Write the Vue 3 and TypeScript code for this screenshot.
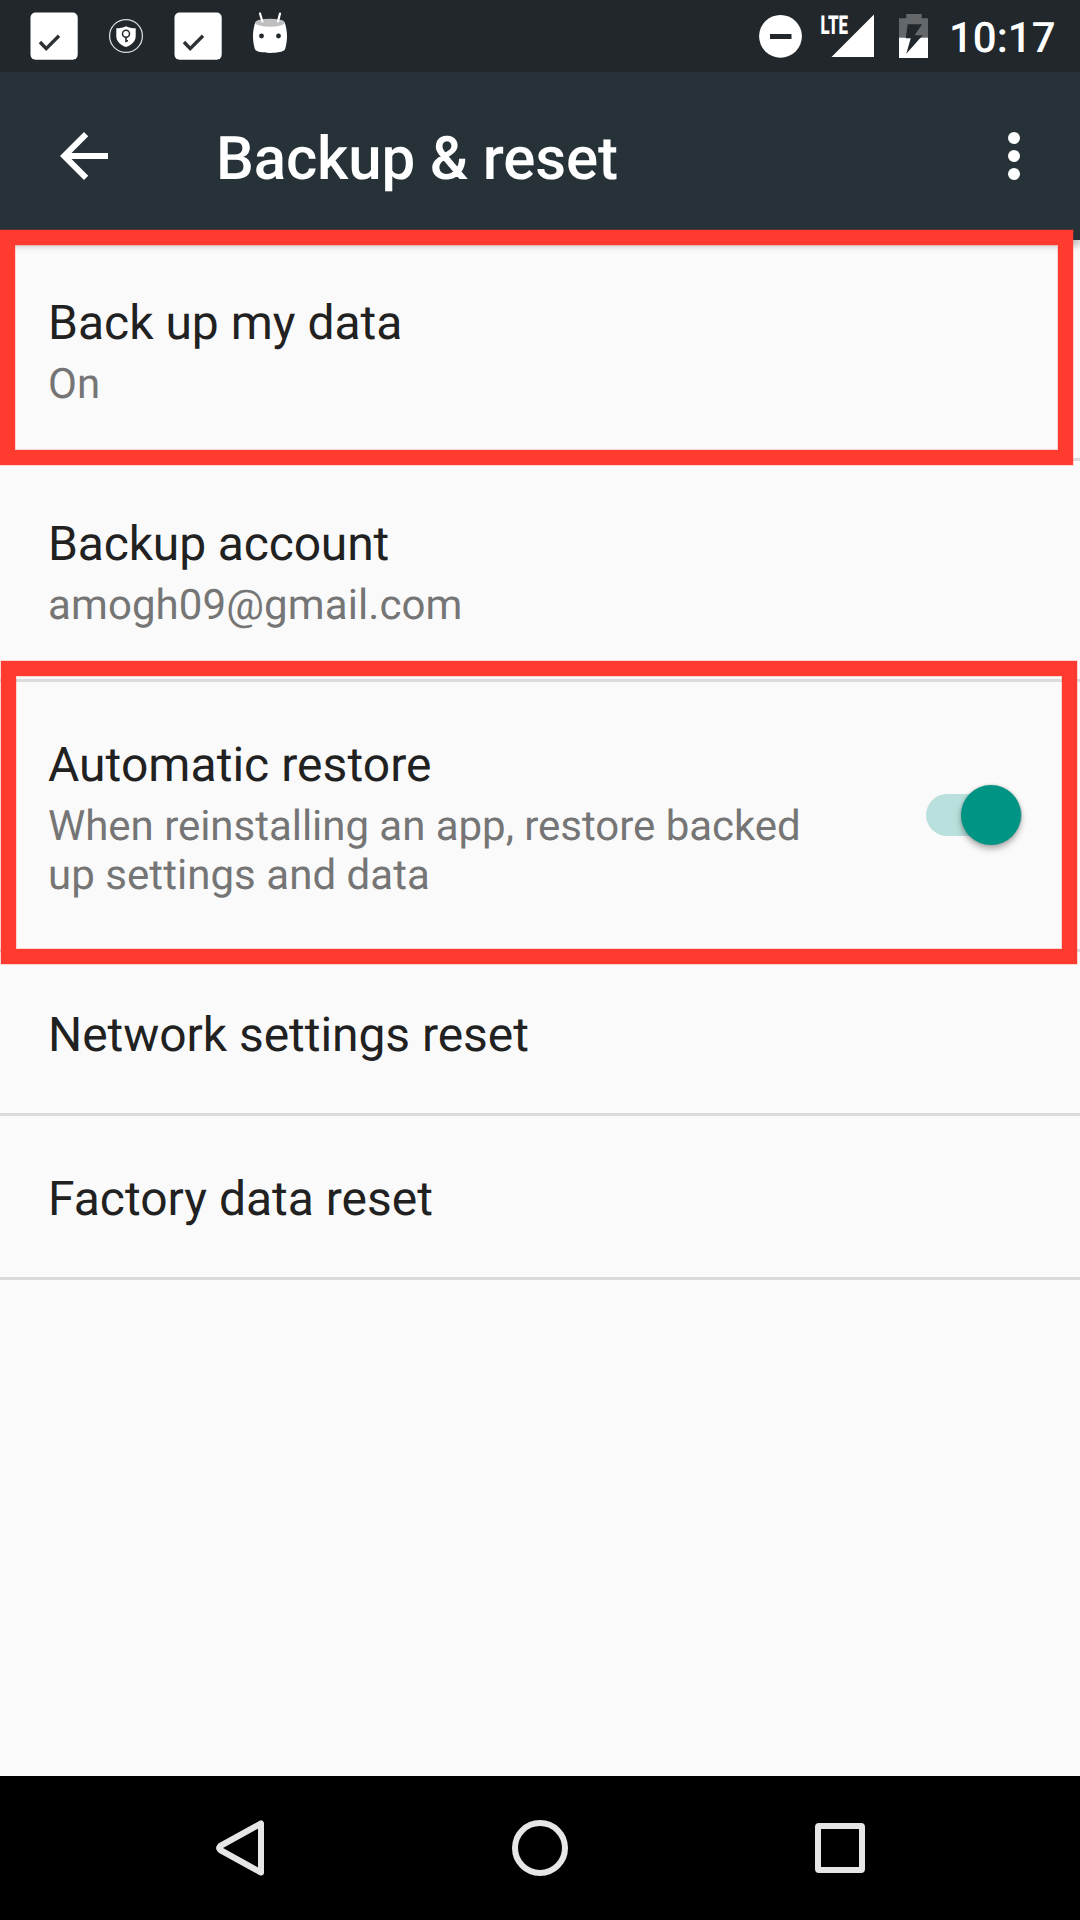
<script setup lang="ts">
interface Line {
  text: string
  tracking?: number
}

interface Setting {
  title: Line
  lines?: Line[]
  toggle?: boolean
}

const settings: Setting[] = [
  { title: { text: 'Back up my data' }, lines: [{ text: 'On' }] },
  {
    title: { text: 'Backup account', tracking: -0.15 },
    lines: [{ text: 'amogh09@gmail.com', tracking: 0.1 }],
  },
  {
    title: { text: 'Automatic restore', tracking: 0.05 },
    lines: [
      { text: 'When reinstalling an app, restore backed', tracking: -0.03 },
      { text: 'up settings and data', tracking: 0.05 },
    ],
    toggle: true,
  },
  { title: { text: 'Network settings reset', tracking: -0.05 } },
  { title: { text: 'Factory data reset' } },
]

const spacing = (line: Line) => ({ letterSpacing: `${line.tracking ?? 0}px` })
</script>

<template>
  <div class="screen">
    <header class="status">
      <svg class="notifications" width="300" height="72" viewBox="0 0 300 72">
        <g v-for="x in [0, 144]" :key="x" :transform="`translate(${x} 0)`">
          <rect x="30.5" y="12.5" width="47.2" height="47.2" rx="5" fill="#fff" />
          <path d="M40 42l6.2 6.6L59 35.8" fill="none" stroke="#2b3135" stroke-width="3.4" />
        </g>
        <circle cx="126" cy="36" r="16.4" fill="none" stroke="#d8d9da" stroke-width="1.3" />
        <path d="M126 26.3c3 1.6 6 2 9.7 2v8c0 5-4 8.8-9.7 10.7-5.7-1.9-9.7-5.7-9.7-10.7v-8c3.7 0 6.7-.4 9.7-2z" fill="#fff" />
        <circle cx="126" cy="33.7" r="3.5" fill="none" stroke="#21272b" stroke-width="1.5" />
        <path d="M126 37v5.3M126 40.7h2" fill="none" stroke="#21272b" stroke-width="1.6" />
        <path d="M255.3 22.5c-3 8.5-3 18-.4 26.5 1.3 5.2 28.9 5.2 30.2 0 2.6-8.5 2.6-18-.4-26.5z" fill="#fff" />
        <ellipse cx="270" cy="22.7" rx="14.7" ry="4" fill="#bdbfc0" />
        <path d="M260 13.5l2.4 8M280 13.5l-2 8" stroke="#fff" stroke-width="2.2" stroke-linecap="round" />
        <circle cx="261.5" cy="36" r="2.4" fill="#21272b" />
        <circle cx="278.5" cy="36" r="2.4" fill="#21272b" />
      </svg>
      <div class="system">
        <svg width="190" height="72" viewBox="750 0 190 72">
          <circle cx="780.5" cy="36.3" r="21.4" fill="#fff" />
          <rect x="770" y="34" width="21.5" height="5" fill="#21272b" />
          <text x="820.5" y="34" class="lte" textLength="27.5" lengthAdjust="spacingAndGlyphs">LTE</text>
          <path d="M874 14.5V57h-42.5z" fill="#fff" />
          <path d="M906.3 14h15.4v4.2h6.3V38h-29V18.2h7.3z" fill="#64686b" />
          <path d="M899 37.7h29V58h-29z" fill="#fff" />
          <path d="M907.7 24.3H922l-7.3 11h8l-16.4 18.4 4.4-15.4h-5z" fill="#21272b" />
        </svg>
        <span class="clock">10:17</span>
      </div>
    </header>

    <div class="appbar">
      <svg width="72" height="72" viewBox="0 0 24 24" fill="#fff">
        <path d="M20 11H7.83l5.59-5.59L12 4l-8 8 8 8 1.41-1.41L7.83 13H20v-2z" />
      </svg>
      <h1>Backup &amp; reset</h1>
      <svg width="72" height="72" viewBox="0 0 24 24" fill="#fff">
        <circle cx="12" cy="6" r="2" />
        <circle cx="12" cy="12" r="2" />
        <circle cx="12" cy="18" r="2" />
      </svg>
    </div>

    <main class="list">
      <section v-for="item in settings" :key="item.title.text" class="row">
        <div class="copy">
          <div class="title" :style="spacing(item.title)">{{ item.title.text }}</div>
          <div v-if="item.lines" class="summary">
            <div v-for="line in item.lines" :key="line.text" :style="spacing(line)">{{ line.text }}</div>
          </div>
        </div>
        <div v-if="item.toggle" class="switch"><div class="thumb"></div></div>
      </section>
    </main>

    <nav class="nav">
      <svg width="720" height="144" viewBox="180 1776 720 144" fill="none" stroke="#e6e6e6" stroke-width="6" stroke-linejoin="round">
        <path d="M261 1823.5v49L220.2 1850q-2-2 0-4z" />
        <circle cx="540" cy="1848" r="25" />
        <rect x="818" y="1826" width="44" height="44" rx="1" />
      </svg>
    </nav>

    <div class="highlight first"></div>
    <div class="highlight second"></div>
  </div>
</template>

<style>
body {
  margin: 0;
  background: #fafafa;
}
</style>

<style scoped>
.screen {
  position: relative;
  display: flex;
  flex-direction: column;
  width: 1080px;
  height: 1920px;
  overflow: hidden;
  background: #fafafa;
  font-family: Roboto, "Liberation Sans", sans-serif;
  text-rendering: geometricPrecision;
}
svg {
  display: block;
  flex: none;
}
.status {
  display: flex;
  justify-content: space-between;
  height: 72px;
  background: #21272b;
}
.system {
  display: flex;
  width: 330px;
}
.clock {
  margin-left: 9px;
  color: #fff;
  font-size: 42px;
  font-weight: 500;
  line-height: 77px;
  white-space: nowrap;
}
.lte {
  fill: #fff;
  font-size: 26px;
  font-weight: 900;
}
.appbar {
  z-index: 1;
  display: flex;
  align-items: center;
  height: 168px;
  padding: 0 30px 0 48px;
  box-sizing: border-box;
  background: #263238;
  box-shadow: 0 6px 6px rgba(0, 0, 0, 0.22);
}
h1 {
  flex: 1;
  margin: 6px 0 0 96px;
  color: #fff;
  font-size: 60px;
  font-weight: 500;
  line-height: 72px;
  letter-spacing: -0.15px;
}
.list {
  flex: 1;
}
.row {
  display: flex;
  justify-content: space-between;
  padding: 55px 58px 50px 48px;
  border-bottom: 3px solid #dbdbdb;
}
.title {
  color: #212121;
  font-size: 48px;
  line-height: 56px;
}
.summary {
  margin: 9px 0 -1px;
  color: #757575;
  font-size: 42px;
  line-height: 49px;
}
.switch {
  width: 96px;
  height: 42px;
  margin-top: 57px;
  border-radius: 21px;
  background: #b9e0dc;
}
.thumb {
  width: 60px;
  height: 60px;
  margin: -9px 0 0 35px;
  border-radius: 50%;
  background: #009485;
  box-shadow: 0 4px 6px rgba(0, 0, 0, 0.3), 0 0 3px rgba(0, 0, 0, 0.2);
}
.nav {
  display: flex;
  justify-content: center;
  height: 144px;
  background: #000;
}
.highlight {
  position: absolute;
  z-index: 2;
  box-sizing: border-box;
  border: 15px solid #ff3b30;
  box-shadow: 0 0 0 1px rgba(255, 59, 48, 0.2), inset 0 0 0 1px rgba(255, 59, 48, 0.2);
}
.first {
  top: 230px;
  left: 0;
  width: 1073px;
  height: 235px;
}
.second {
  top: 661px;
  left: 1px;
  width: 1076px;
  height: 303px;
}
</style>
